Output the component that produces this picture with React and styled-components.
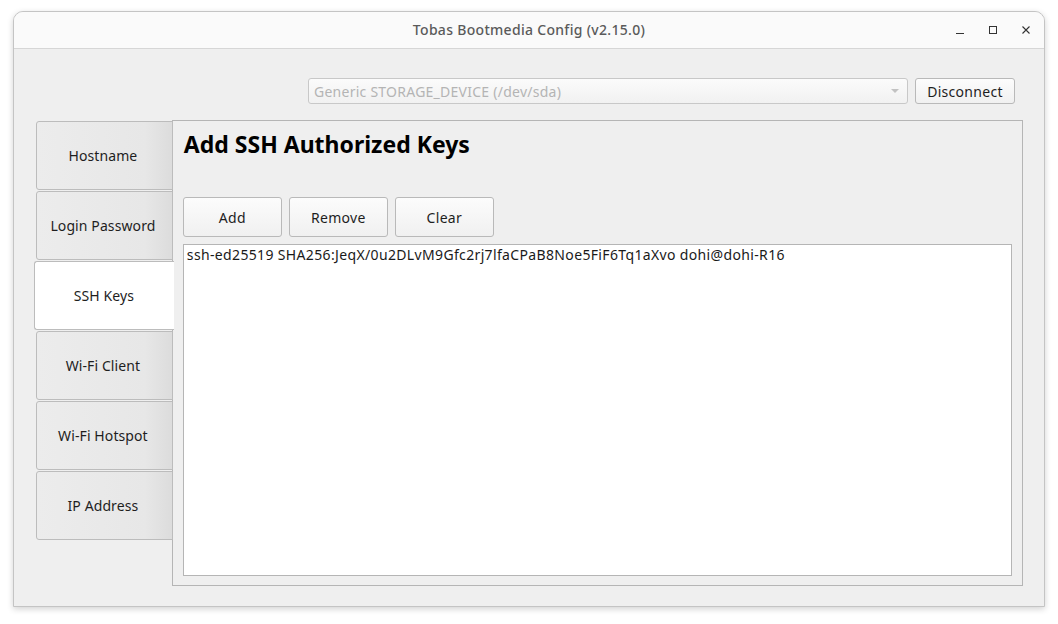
import React from "react";
import styled, { createGlobalStyle } from "styled-components";

const Global = createGlobalStyle`
  html, body { margin: 0; padding: 0; background: #ffffff; }
  body { font-family: "Noto Sans", "Open Sans", sans-serif; }
  * { box-sizing: border-box; }
`;

const Page = styled.div`
  padding: 11px 0 0 13px;
  width: 1058px;
  height: 624px;
`;

const Window = styled.div`
  width: 1032px;
  height: 596px;
  border: 1px solid #c4c4c4;
  border-radius: 10px 10px 0 0;
  background: #efefef;
  box-shadow: 0 2px 6px rgba(0, 0, 0, 0.18);
  display: flex;
  flex-direction: column;
  overflow: hidden;
`;

const TitleBar = styled.div`
  height: 37px;
  flex: none;
  background: #fafafa;
  border-bottom: 1px solid #d6d6d6;
  position: relative;
  display: flex;
  align-items: center;
  justify-content: center;
`;

const Title = styled.div`
  font-size: 14px;
  font-weight: 500;
  color: #5a5a5a;
  letter-spacing: 0.3px;
  margin-top: -2px;
`;

const Controls = styled.div`
  position: absolute;
  right: 10px;
  top: 0;
  height: 100%;
  display: flex;
  align-items: center;
  gap: 17px;
`;

const CtrlBtn = styled.div`
  width: 16px;
  height: 16px;
  display: flex;
  align-items: center;
  justify-content: center;
`;

const Body = styled.div`
  flex: 1;
  padding: 29px 21px 21px 22px;
  display: flex;
  flex-direction: column;
`;

const TopRow = styled.div`
  display: flex;
  justify-content: flex-end;
  gap: 7px;
  padding-right: 8px;
  height: 26px;
`;

const Combo = styled.div`
  width: 600px;
  height: 26px;
  border: 1px solid #c8c8c8;
  border-radius: 3px;
  background: linear-gradient(#fbfbfb, #f1f1f1);
  display: flex;
  align-items: center;
  justify-content: space-between;
  padding: 0 6px 0 5px;
  font-size: 14px;
  color: #b4b4b4;
  letter-spacing: 0.25px;
`;

const Arrow = styled.div`
  width: 0;
  height: 0;
  border-left: 4px solid transparent;
  border-right: 4px solid transparent;
  border-top: 4px solid #c2c2c2;
  margin-right: 2px;
`;

const Button = styled.button`
  width: ${(p) => p.$w || 99}px;
  height: ${(p) => p.$h || 26}px;
  border: 1px solid #b9b9b9;
  border-radius: 3px;
  background: linear-gradient(#fcfcfc, #f0f0f0);
  font-family: "Noto Sans", "Open Sans", sans-serif;
  font-size: 14px;
  color: #1e1e1e;
  letter-spacing: 0.3px;
  padding: 0;
  display: flex;
  align-items: center;
  justify-content: center;
`;

const Main = styled.div`
  margin-top: 16px;
  flex: 1;
  display: flex;
`;

const TabList = styled.div`
  width: 137px;
  padding-top: 1px;
  display: flex;
  flex-direction: column;
  gap: 1px;
  position: relative;
  z-index: 2;
`;

const Tab = styled.div`
  height: 69px;
  margin-left: ${(p) => (p.$active ? "-2px" : "0")};
  margin-right: ${(p) => (p.$active ? "-1px" : "0")};
  border: 1px solid #bcbcbc;
  border-right: ${(p) => (p.$active ? "none" : "1px solid #bcbcbc")};
  border-radius: 3px 0 0 3px;
  background: ${(p) =>
    p.$active
      ? "#ffffff"
      : "linear-gradient(to right, #ececec 0%, #e7e7e7 80%, #dcdcdc 100%)"};
  display: flex;
  align-items: center;
  justify-content: center;
  padding-right: ${(p) => (p.$active ? "1px" : "3px")};
  font-size: 14px;
  color: #1e1e1e;
  letter-spacing: 0.1px;
`;

const Panel = styled.div`
  width: 852px;
  height: 466px;
  margin-left: -1px;
  border: 1px solid #b5b5b5;
  background: #efefef;
  padding: 7px 10px 9px 11px;
  display: flex;
  flex-direction: column;
`;

const Heading = styled.h1`
  margin: 0;
  font-size: 23px;
  font-weight: 700;
  color: #000;
  letter-spacing: 0px;
  line-height: 32px;
`;

const ButtonRow = styled.div`
  margin-top: 37px;
  margin-left: -1px;
  display: flex;
  gap: 7px;
`;

const KeyList = styled.div`
  margin-top: 7px;
  margin-left: -1px;
  flex: 1;
  background: #ffffff;
  border: 1px solid #b5b5b5;
  padding: 0 3px;
  font-size: 14px;
  color: #1a1a1a;
  letter-spacing: 0.35px;
  line-height: 19px;
`;

export default function App() {
  return (
    <>
      <Global />
      <Page>
        <Window>
          <TitleBar>
            <Title>Tobas Bootmedia Config (v2.15.0)</Title>
            <Controls>
              <CtrlBtn>
                <svg width="10" height="10" viewBox="0 0 10 10">
                  <path d="M1 8.5h8" stroke="#333" strokeWidth="1" />
                </svg>
              </CtrlBtn>
              <CtrlBtn>
                <svg width="10" height="10" viewBox="0 0 10 10">
                  <rect x="1.5" y="1.5" width="7" height="7" fill="none" stroke="#333" strokeWidth="1" />
                </svg>
              </CtrlBtn>
              <CtrlBtn>
                <svg width="10" height="10" viewBox="0 0 10 10">
                  <path d="M1.5 1.5l7 7M8.5 1.5l-7 7" stroke="#333" strokeWidth="1.1" />
                </svg>
              </CtrlBtn>
            </Controls>
          </TitleBar>
          <Body>
            <TopRow>
              <Combo>
                <span>Generic STORAGE_DEVICE (/dev/sda)</span>
                <Arrow />
              </Combo>
              <Button $w={100}>Disconnect</Button>
            </TopRow>
            <Main>
              <TabList>
                <Tab>Hostname</Tab>
                <Tab>Login Password</Tab>
                <Tab $active>SSH Keys</Tab>
                <Tab>Wi-Fi Client</Tab>
                <Tab>Wi-Fi Hotspot</Tab>
                <Tab>IP Address</Tab>
              </TabList>
              <Panel>
                <Heading>Add SSH Authorized Keys</Heading>
                <ButtonRow>
                  <Button $h={40}>Add</Button>
                  <Button $h={40}>Remove</Button>
                  <Button $h={40}>Clear</Button>
                </ButtonRow>
                <KeyList>
                  ssh-ed25519 SHA256:JeqX/0u2DLvM9Gfc2rj7lfaCPaB8Noe5FiF6Tq1aXvo dohi@dohi-R16
                </KeyList>
              </Panel>
            </Main>
          </Body>
        </Window>
      </Page>
    </>
  );
}
